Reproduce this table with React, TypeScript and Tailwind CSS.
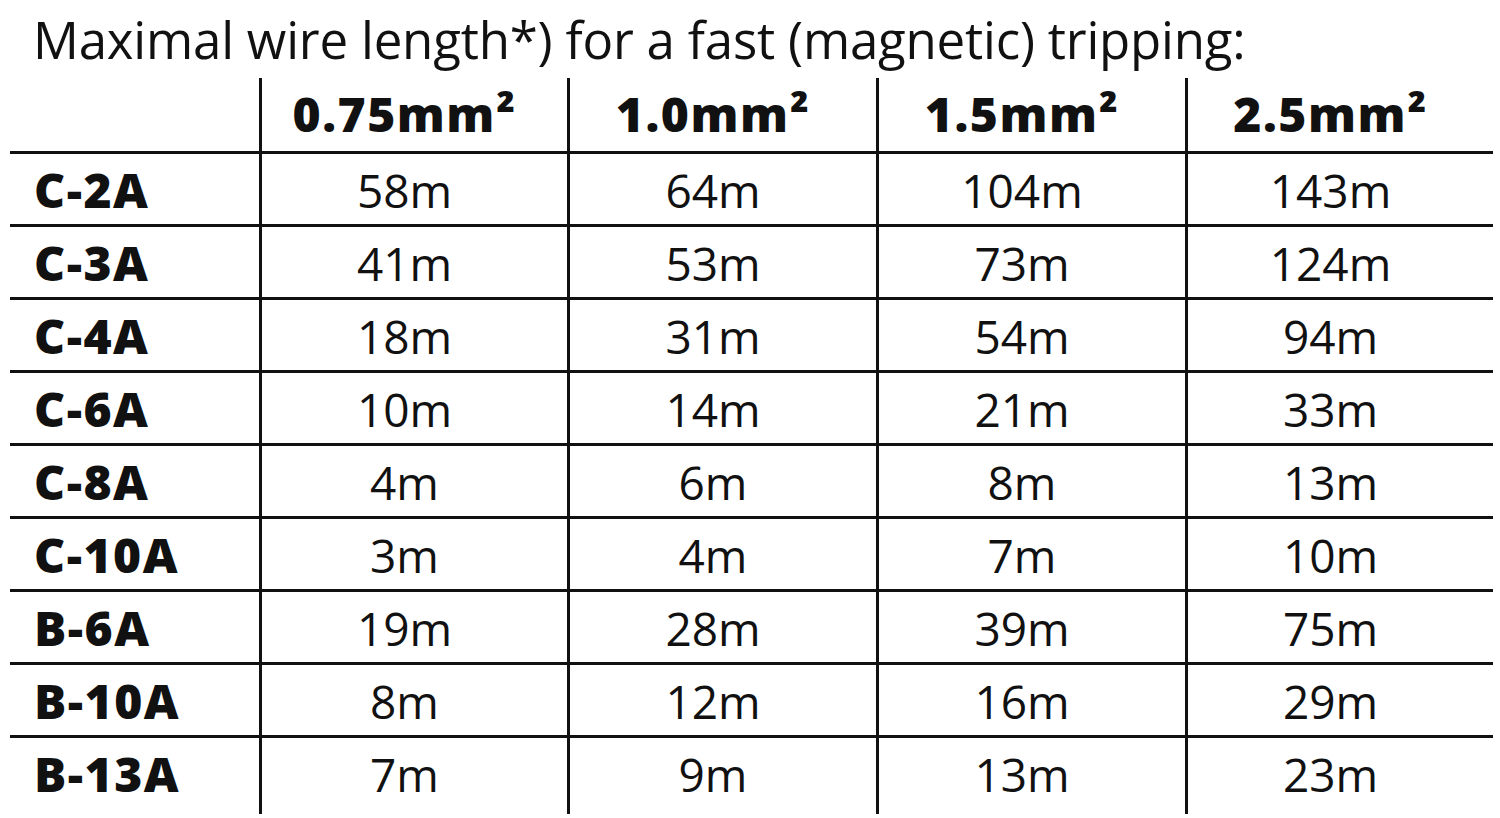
import React from "react";

const sizes = ["0.75mm²", "1.0mm²", "1.5mm²", "2.5mm²"];

const rows: [string, string[]][] = [
  ["C-2A", ["58m", "64m", "104m", "143m"]],
  ["C-3A", ["41m", "53m", "73m", "124m"]],
  ["C-4A", ["18m", "31m", "54m", "94m"]],
  ["C-6A", ["10m", "14m", "21m", "33m"]],
  ["C-8A", ["4m", "6m", "8m", "13m"]],
  ["C-10A", ["3m", "4m", "7m", "10m"]],
  ["B-6A", ["19m", "28m", "39m", "75m"]],
  ["B-10A", ["8m", "12m", "16m", "29m"]],
  ["B-13A", ["7m", "9m", "13m", "23m"]],
];

const grid = "grid w-[1483px] grid-cols-[249px_308px_309px_309px_308px]";

export default function App() {
  return (
    <div className="w-[1500px] h-[818px] bg-white text-[#111] overflow-hidden font-['Open_Sans',sans-serif]">
      <div className="h-[78px] pl-[33px] pt-[9px] text-[51px] leading-[60px] tracking-[-0.2px] whitespace-nowrap">
        Maximal wire length*) for a fast (magnetic) tripping:
      </div>
      <div className="ml-[10px]">
        {/* Header */}
        <div className={`${grid} h-[73px]`}>
          <div />
          {sizes.map((s) => (
            <div
              key={s}
              className="border-l-[3px] border-[#111] flex items-center justify-center pr-5 pb-[4px] text-[48px] font-extrabold tracking-[1.5px]"
            >
              {s}
            </div>
          ))}
        </div>
        {/* Body */}
        {rows.map(([label, vals], i) => (
          <div
            key={label}
            className={`${grid} border-t-[3px] border-[#111] ${i === rows.length - 1 ? "h-[75px]" : "h-[73px]"}`}
          >
            <div className="flex items-center pl-[24px] pb-[4px] text-[48px] font-extrabold tracking-[1.5px]">
              {label}
            </div>
            {vals.map((v, j) => (
              <div
                key={j}
                className="border-l-[3px] border-[#111] flex items-center justify-center pr-5 pb-[4px] text-[46px]"
              >
                {v}
              </div>
            ))}
          </div>
        ))}
      </div>
    </div>
  );
}
